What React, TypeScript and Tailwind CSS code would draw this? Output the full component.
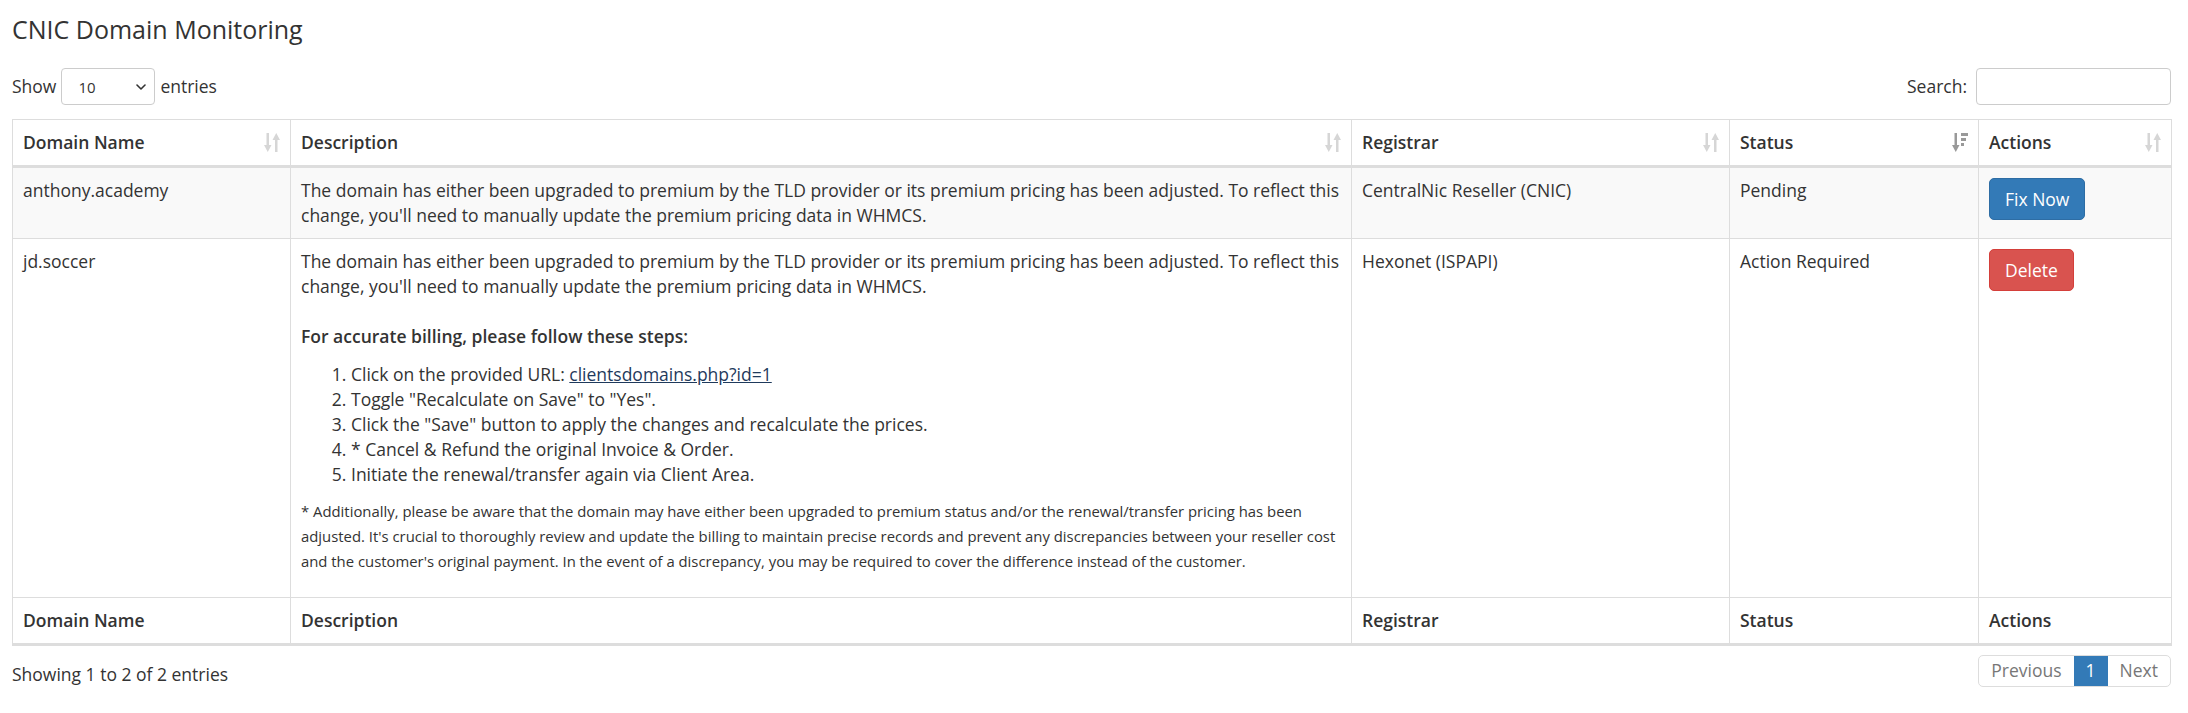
import React from 'react';

const SortIcon: React.FC<{ active?: boolean }> = ({ active }) => {
  if (active) {
    return (
      <svg width="16" height="19" viewBox="0 0 16 19" className="shrink-0">
        <rect x="2.5" y="0" width="2.5" height="13" fill="#999" />
        <polygon points="0,12 7.5,12 3.75,19" fill="#999" />
        <rect x="9" y="0" width="7" height="3" fill="#999" />
        <rect x="9" y="5" width="5" height="3" fill="#999" />
        <rect x="9" y="10" width="3" height="3" fill="#999" />
      </svg>
    );
  }
  return (
    <svg width="16" height="19" viewBox="0 0 16 19" className="shrink-0">
      <rect x="2.5" y="0" width="2.5" height="13" fill="#d6d6d6" />
      <polygon points="0,12 7.5,12 3.75,19" fill="#d6d6d6" />
      <polygon points="8.5,7 16,7 12.25,0" fill="#d6d6d6" />
      <rect x="11" y="6" width="2.5" height="13" fill="#d6d6d6" />
    </svg>
  );
};

const headers = [
  { label: 'Domain Name', active: false },
  { label: 'Description', active: false },
  { label: 'Registrar', active: false },
  { label: 'Status', active: true },
  { label: 'Actions', active: false },
];

const line1 =
  'The domain has either been upgraded to premium by the TLD provider or its premium pricing has been adjusted. To reflect this';
const line2 = "change, you'll need to manually update the premium pricing data in WHMCS.";

const App: React.FC = () => {
  return (
    <div className="min-h-[713px] bg-white pl-[12px] pr-[17px] font-['Open_Sans',sans-serif] text-[17.5px] leading-[25px] text-[#333]">
      <h1 className="mt-[14px] text-[25px] leading-[30px] font-normal text-[#333]">CNIC Domain Monitoring</h1>

      <div className="mt-[24px] flex items-center justify-between">
        <div className="flex items-center gap-[5px]">
          <span>Show</span>
          <div className="flex h-[37px] w-[94px] items-center justify-between rounded-[4px] border border-[#ccc] bg-white pl-[16px] pr-[8px] text-[15px]">
            <span className="mt-[2px]">10</span>
            <svg width="10" height="6" viewBox="0 0 10 6" fill="none">
              <path d="M1 1l4 4 4-4" stroke="#333" strokeWidth="1.6" strokeLinecap="round" strokeLinejoin="round" />
            </svg>
          </div>
          <span>entries</span>
        </div>
        <div className="flex items-center gap-[9px]">
          <span>Search:</span>
          <div className="h-[37px] w-[195px] rounded-[4px] border border-[#ccc] bg-white" />
        </div>
      </div>

      <table className="mt-[14px] w-full table-fixed border-collapse">
        <colgroup>
          <col className="w-[278px]" />
          <col className="w-[1061px]" />
          <col className="w-[378px]" />
          <col className="w-[249px]" />
          <col className="w-[193px]" />
        </colgroup>
        <thead>
          <tr>
            {headers.map((h) => (
              <th key={h.label} className="border border-b-[3px] border-[#ddd] px-[10px] py-[10px] text-left font-semibold">
                <div className="flex items-center justify-between">
                  <span>{h.label}</span>
                  <SortIcon active={h.active} />
                </div>
              </th>
            ))}
          </tr>
        </thead>
        <tbody>
          <tr className="bg-[#f9f9f9] align-top">
            <td className="border border-[#ddd] p-[10px]">anthony.academy</td>
            <td className="border border-[#ddd] p-[10px]">
              <span className="block whitespace-nowrap">{line1}</span>
              <span className="block whitespace-nowrap">{line2}</span>
            </td>
            <td className="border border-[#ddd] p-[10px]">CentralNic Reseller (CNIC)</td>
            <td className="border border-[#ddd] p-[10px]">Pending</td>
            <td className="border border-[#ddd] p-[10px]">
              <button className="h-[42px] rounded-[5px] border border-[#2e6da4] bg-[#337ab7] px-[15px] text-white">Fix Now</button>
            </td>
          </tr>
          <tr className="bg-white align-top">
            <td className="border border-[#ddd] p-[10px]">jd.soccer</td>
            <td className="border border-[#ddd] p-[10px]">
              <span className="block whitespace-nowrap">{line1}</span>
              <span className="block whitespace-nowrap">{line2}</span>
              <span className="block h-[25px]" />
              <p className="mb-[12.5px] font-semibold">For accurate billing, please follow these steps:</p>
              <ol className="mb-[12.5px] list-decimal pl-[50px]">
                <li>
                  Click on the provided URL:{' '}
                  <a href="#" className="text-[#1f3a5c] underline">clientsdomains.php?id=1</a>
                </li>
                <li>Toggle "Recalculate on Save" to "Yes".</li>
                <li>Click the "Save" button to apply the changes and recalculate the prices.</li>
                <li>* Cancel &amp; Refund the original Invoice &amp; Order.</li>
                <li>Initiate the renewal/transfer again via Client Area.</li>
              </ol>
              <p className="mb-[12.5px] text-[14.875px] leading-[25px]">
                <span className="block whitespace-nowrap">
                  * Additionally, please be aware that the domain may have either been upgraded to premium status and/or the renewal/transfer pricing has been
                </span>
                <span className="block whitespace-nowrap">
                  adjusted. It's crucial to thoroughly review and update the billing to maintain precise records and prevent any discrepancies between your reseller cost
                </span>
                <span className="block whitespace-nowrap">
                  and the customer's original payment. In the event of a discrepancy, you may be required to cover the difference instead of the customer.
                </span>
              </p>
            </td>
            <td className="border border-[#ddd] p-[10px]">Hexonet (ISPAPI)</td>
            <td className="border border-[#ddd] p-[10px]">Action Required</td>
            <td className="border border-[#ddd] p-[10px]">
              <button className="h-[42px] rounded-[5px] border border-[#d43f3a] bg-[#d9534f] px-[15px] text-white">Delete</button>
            </td>
          </tr>
        </tbody>
        <tfoot>
          <tr>
            {headers.map((h) => (
              <th key={h.label} className="border border-b-[3px] border-[#ddd] p-[10px] text-left font-semibold">
                {h.label}
              </th>
            ))}
          </tr>
        </tfoot>
      </table>

      <div className="mt-[9px] flex items-start justify-between">
        <div className="pt-[7px]">Showing 1 to 2 of 2 entries</div>
        <div className="flex h-[32px] overflow-hidden rounded-[5px] border border-[#ddd]">
          <span className="flex items-center px-[12px] text-[#777]">Previous</span>
          <span className="flex items-center bg-[#337ab7] px-[12px] text-white">1</span>
          <span className="flex items-center px-[12px] text-[#777]">Next</span>
        </div>
      </div>
    </div>
  );
};

export default App;
